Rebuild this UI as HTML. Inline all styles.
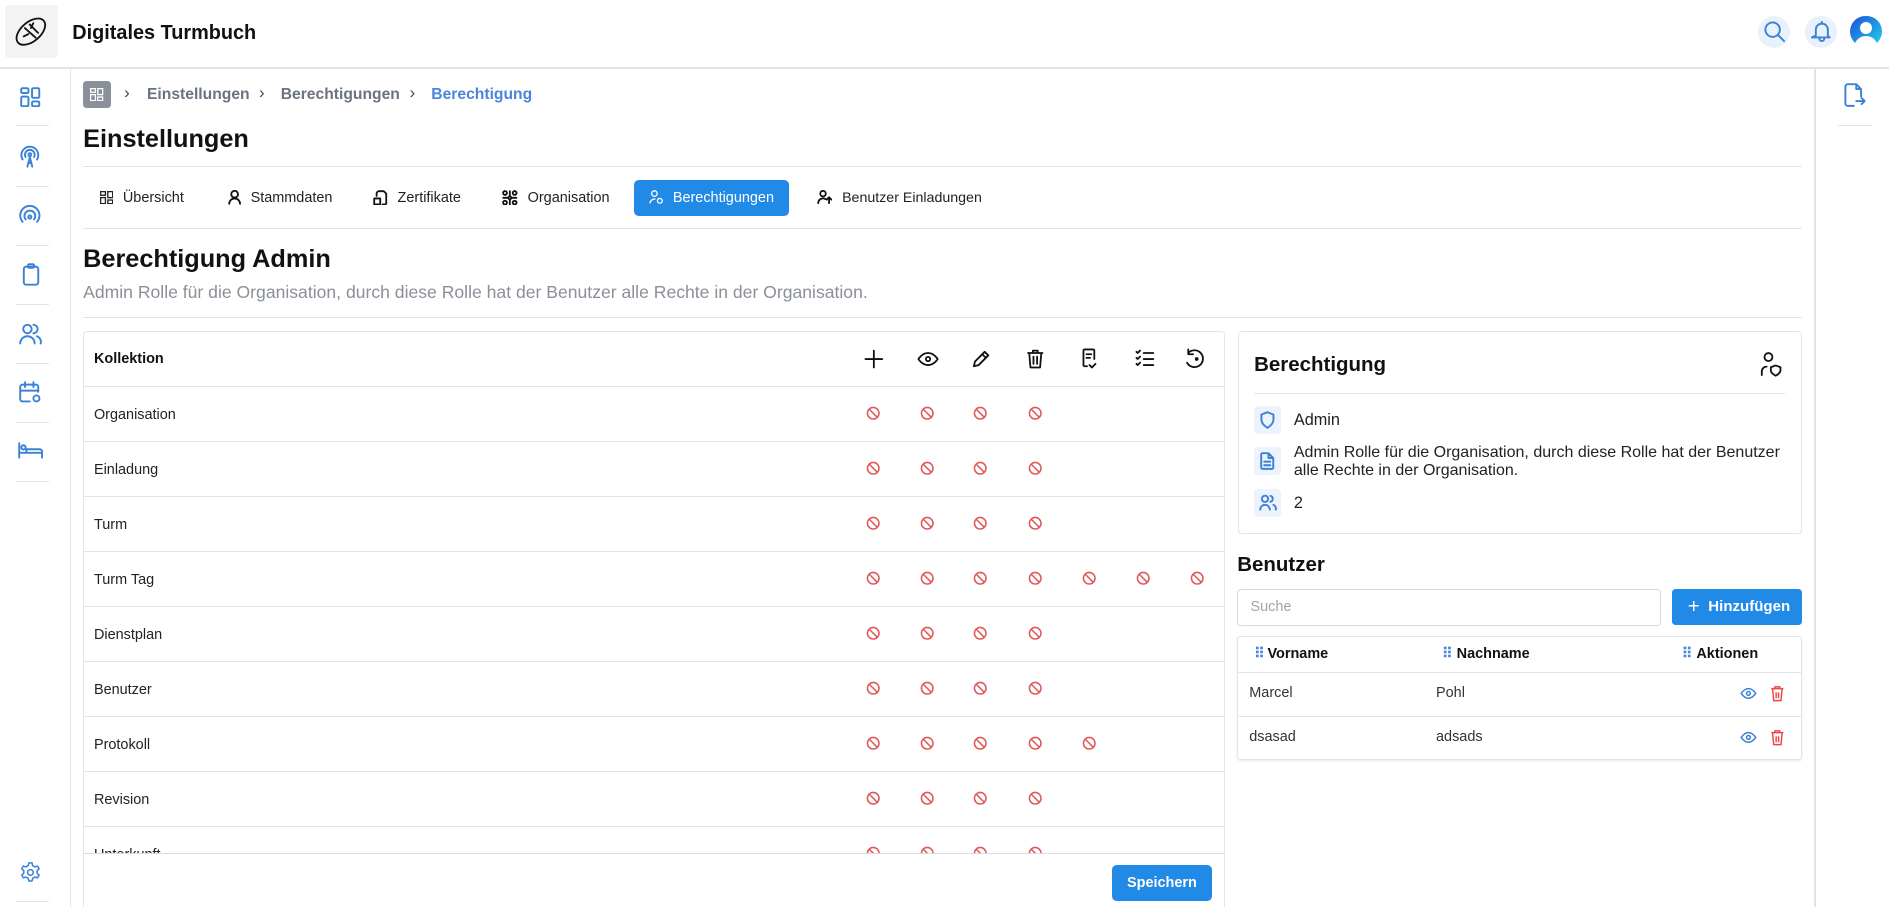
<!DOCTYPE html>
<html><head><meta charset="utf-8">
<style>
html,body{margin:0;padding:0;background:#fff;overflow:hidden}
body{width:1889px;height:908px}
#r{position:absolute;left:0;top:0;width:1568px;height:753px;overflow:hidden;zoom:1.20472;font-family:"Liberation Sans",sans-serif;color:#111}
.a{position:absolute}
.hl{position:absolute;height:1px;background:#e2e4e8}
.vl{position:absolute;width:1px;background:#e2e4e8}
svg{display:block}
.ic{stroke:#3b82d6;fill:none;stroke-width:1.6;stroke-linecap:round;stroke-linejoin:round}
.bk{stroke:#111;fill:none;stroke-width:1.5;stroke-linecap:round;stroke-linejoin:round}
.tab{position:absolute;top:149px;height:30px;line-height:30px;font-size:12px;color:#222;display:flex;align-items:center;gap:8px}
.row{position:absolute;left:70px;width:946px;height:46px;border-top:1px solid #e2e4e8;font-size:12px;color:#222}
.row span{position:absolute;left:8px;top:17px}
.ban{position:absolute;top:16px}
</style></head><body><div id="r">
<div class="a" style="left:4px;top:4px;width:44px;height:44px;background:#f2f3f5;border-radius:3px"></div>
<svg class="a" style="left:12px;top:13px" width="28" height="26" viewBox="0 0 28 26"><g class="bk" stroke-width="1.3"><ellipse cx="14" cy="13" rx="14" ry="8" transform="rotate(-40 14 13)"/><path d="M9 10l9 8M13 7l7 7M8 17l4-2M16 6l-2 4"/></g></svg>
<div class="a" style="left:60px;top:18px;font-size:16.5px;font-weight:bold">Digitales Turmbuch</div>
<div class="hl" style="left:0;top:56px;width:1568px"></div>
<div class="a" style="left:1459px;top:13px;width:27px;height:27px;border-radius:50%;background:#e8f1fc"></div>
<svg class="a" style="left:1463px;top:17px" width="20" height="20" viewBox="0 0 20 20"><g class="ic"><circle cx="8" cy="8" r="6"/><path d="M12.5 12.5l5 5"/></g></svg>
<div class="a" style="left:1498px;top:13px;width:27px;height:27px;border-radius:50%;background:#e8f1fc"></div>
<svg class="a" style="left:1503px;top:17px" width="18" height="18" viewBox="0 0 18 18"><g class="ic"><path d="M4 13V8a5 5 0 0110 0v5l1.5 1.5h-15z M7 15.5a2 2 0 004 0M9 1.5v1.5"/></g></svg>
<div class="a" style="left:1536px;top:13px;width:26px;height:26px;border-radius:50%;background:linear-gradient(135deg,#1d4ed8,#22d3ee)"></div>
<div class="a" style="left:1544px;top:18px;width:10px;height:10px;border-radius:50%;background:#fff"></div>
<div class="a" style="left:1539px;top:30px;width:20px;height:10px;border-radius:10px 10px 0 0;background:#fff"></div>
<div class="vl" style="left:58px;top:56px;height:698px"></div>
<svg class="a" style="left:17px;top:72px" width="17" height="17" viewBox="0 0 17 17"><g class="ic"><rect x="1" y="1" width="6" height="4" rx="1"/><rect x="1" y="8" width="6" height="8" rx="1"/><rect x="10" y="1" width="6" height="8" rx="1"/><rect x="10" y="12" width="6" height="4" rx="1"/></g></svg>
<div class="hl" style="left:13px;top:104px;width:28px"></div>
<svg class="a" style="left:16px;top:120px" width="18" height="20" viewBox="0 0 18 20"><g class="ic"><path d="M3 12a7 7 0 1112 0M5.5 10a4 4 0 117 0"/><circle cx="9" cy="8" r="1.2"/><path d="M7 18l2-8 2 8M7.5 15h3"/></g></svg>
<div class="hl" style="left:13px;top:154px;width:28px"></div>
<svg class="a" style="left:16px;top:170px" width="18" height="18" viewBox="0 0 18 18"><g class="ic"><path d="M3 14a8 8 0 1112 0M5.5 12a4.5 4.5 0 117 0"/><circle cx="9" cy="10" r="1.3"/></g></svg>
<div class="hl" style="left:13px;top:203px;width:28px"></div>
<svg class="a" style="left:18px;top:218px" width="15" height="19" viewBox="0 0 15 19"><g class="ic"><rect x="1.5" y="3" width="12" height="15" rx="2"/><rect x="5" y="1" width="5" height="3" rx="1"/></g></svg>
<div class="hl" style="left:13px;top:252px;width:28px"></div>
<svg class="a" style="left:16px;top:268px" width="19" height="18" viewBox="0 0 19 18"><g class="ic"><circle cx="7" cy="5" r="3.5"/><path d="M1 17a6 6 0 0112 0M12 1.5a3.5 3.5 0 010 7M15 11a5 5 0 013 6"/></g></svg>
<div class="hl" style="left:13px;top:301px;width:28px"></div>
<svg class="a" style="left:16px;top:316px" width="19" height="19" viewBox="0 0 19 19"><g class="ic"><path d="M9 17H3a2 2 0 01-2-2V5a2 2 0 012-2h11a2 2 0 012 2v4M1 8h15M5 1v4M12 1v4"/><circle cx="14.5" cy="14.5" r="2.5"/></g></svg>
<div class="hl" style="left:13px;top:350px;width:28px"></div>
<svg class="a" style="left:15px;top:367px" width="21" height="14" viewBox="0 0 21 14"><g class="ic"><path d="M1 1v12M1 9h19v4M7 9V6h11a2 2 0 012 2v1"/><circle cx="4.5" cy="4.5" r="1.8"/></g></svg>
<div class="hl" style="left:13px;top:399px;width:28px"></div>
<svg class="a" style="left:16px;top:715px" width="19" height="19" viewBox="0 0 24 24"><g class="ic" stroke-width="1.9"><circle cx="12" cy="12" r="3"/><path d="M10.3 2h3.4l.6 2.8 2.4 1.4 2.7-.9 1.7 2.9-2.1 1.9v2.8l2.1 1.9-1.7 2.9-2.7-.9-2.4 1.4-.6 2.8h-3.4l-.6-2.8-2.4-1.4-2.7.9-1.7-2.9 2.1-1.9v-2.8L2.9 8.2l1.7-2.9 2.7.9 2.4-1.4z"/></g></svg>
<div class="hl" style="left:13px;top:748px;width:28px"></div>
<div class="vl" style="left:1506px;top:56px;height:698px"></div>
<svg class="a" style="left:1530px;top:69px" width="19" height="20" viewBox="0 0 19 20"><g class="ic"><path d="M11 1H4a2 2 0 00-2 2v14a2 2 0 002 2h5M11 1l4 4v6M11 1v4h4M11 15h7M15.5 12.5L18 15l-2.5 2.5"/></g></svg>
<div class="hl" style="left:1526px;top:104px;width:28px"></div>
<div class="a" style="left:69px;top:67px;width:23px;height:23px;background:#8a9099;border-radius:3px"></div>
<svg class="a" style="left:75px;top:73px" width="11" height="11" viewBox="0 0 11 11"><g fill="none" stroke="#fff" stroke-width="1.1"><rect x=".5" y=".5" width="4" height="3"/><rect x=".5" y="5.5" width="4" height="5"/><rect x="6.5" y=".5" width="4" height="5"/><rect x="6.5" y="7.5" width="4" height="3"/></g></svg>
<div class="a" style="left:103px;top:69px;font-size:14px;color:#444">›</div>
<div class="a" style="left:122px;top:71px;font-size:13px;color:#6b7280;font-weight:bold">Einstellungen</div>
<div class="a" style="left:215px;top:69px;font-size:14px;color:#444">›</div>
<div class="a" style="left:233px;top:71px;font-size:13px;color:#6b7280;font-weight:bold">Berechtigungen</div>
<div class="a" style="left:340px;top:69px;font-size:14px;color:#444">›</div>
<div class="a" style="left:358px;top:71px;font-size:13px;color:#4a86d9;font-weight:bold">Berechtigung</div>
<div class="a" style="left:69px;top:104px;font-size:21px;font-weight:bold">Einstellungen</div>
<div class="hl" style="left:69px;top:138px;width:1427px"></div>
<div class="tab" style="left:83px"><svg width="11" height="11" viewBox="0 0 11 11"><g fill="none" stroke="#222" stroke-width="1.1"><rect x=".5" y=".5" width="4" height="3"/><rect x=".5" y="5.5" width="4" height="5"/><rect x="6.5" y=".5" width="4" height="5"/><rect x="6.5" y="7.5" width="4" height="3"/></g></svg>Übersicht</div>
<div class="tab" style="left:189px"><svg width="11" height="12" viewBox="0 0 11 12"><g class="bk" stroke-width="1.1"><circle cx="5.5" cy="3.5" r="2.8"/><path d="M1 11.5a4.5 4.5 0 019 0"/></g></svg>Stammdaten</div>
<div class="tab" style="left:310px"><svg width="12" height="13" viewBox="0 0 12 13"><g class="bk" stroke-width="1.1"><path d="M3 5V3a2 2 0 012-2h4l2 2v8a1 1 0 01-1 1H8"/><rect x="1" y="7" width="5" height="5"/></g></svg>Zertifikate</div>
<div class="tab" style="left:417px"><svg width="13" height="13" viewBox="0 0 13 13"><g class="bk" stroke-width="1.1"><circle cx="6.5" cy="6.5" r="1.2"/><circle cx="2.5" cy="2.5" r="1.6"/><circle cx="10.5" cy="2.5" r="1.6"/><circle cx="2.5" cy="10.5" r="1.6"/><circle cx="10.5" cy="10.5" r="1.6"/><path d="M6.5 1v4M6.5 8v4M1 6.5h4M8 6.5h4"/></g></svg>Organisation</div>
<div class="tab" style="left:526px;width:129px;background:#2189e6;border-radius:4px;color:#fff;justify-content:center"><svg width="12" height="12" viewBox="0 0 12 12"><g fill="none" stroke="#fff" stroke-width="1.1"><circle cx="4.5" cy="3" r="2.3"/><path d="M.8 11a4 4 0 014.5-3.5"/><circle cx="9" cy="9" r="2"/></g></svg>Berechtigungen</div>
<div class="tab" style="left:678px;font-size:11.8px"><svg width="13" height="12" viewBox="0 0 13 12"><g class="bk" stroke-width="1.1"><circle cx="5" cy="3" r="2.3"/><path d="M1 11a4 4 0 016-3.5M10 6v5M8 8l2-2 2 2"/></g></svg>Benutzer Einladungen</div>
<div class="hl" style="left:69px;top:189px;width:1427px"></div>
<div class="a" style="left:69px;top:203px;font-size:21px;font-weight:bold">Berechtigung Admin</div>
<div class="a" style="left:69px;top:234px;font-size:14.6px;color:#8a8f98">Admin Rolle für die Organisation, durch diese Rolle hat der Benutzer alle Rechte in der Organisation.</div>
<div class="hl" style="left:69px;top:263px;width:1427px"></div>
<div class="a" style="left:69px;top:275px;width:946px;height:479px;border:1px solid #e2e4e8;border-bottom:none;border-radius:3px 3px 0 0"></div>
<div class="a" style="left:78px;top:291px;font-size:12px;font-weight:bold">Kollektion</div>
<svg class="a" style="left:716px;top:288px" width="290" height="20" viewBox="0 0 290 20"><g class="bk">
<path d="M9 3v14M2 10h14"/>
<path d="M46 10s3-5 8-5 8 5 8 5-3 5-8 5-8-5-8-5z"/><circle cx="54" cy="10" r="1.8"/>
<path d="M92 16l1-4 8-8 3 3-8 8zM99 6l3 3"/>
<path d="M137 5h12M141 5V3h4v2M138 5l1 12h8l1-12M141.5 8v6M144.5 8v6"/>
<path d="M186 16h-2a1 1 0 01-1-1V3a1 1 0 011-1h7a1 1 0 011 1v7M185.5 6h4M185.5 9h3M188 15l2 2 3-3"/>
<path d="M227 4l1 1 2-2M227 9l1 1 2-2M227 14l1 1 2-2M233 5h8M233 10h8M233 15h8"/>
<path d="M270 5a7 7 0 11-1 8M270 2v4h4"/><circle cx="277" cy="10" r=".8" fill="#111"/>
</g></svg>
<div id="rows"></div>
<div class="hl" style="left:70px;top:708px;width:946px;background:#d8dbe0"></div>
<div class="a" style="left:70px;top:709px;width:945px;height:44px;background:#fff"></div>
<div class="a" style="left:923px;top:718px;width:83px;height:30px;background:#2189e6;border-radius:4px;color:#fff;font-size:12px;font-weight:bold;line-height:30px;text-align:center">Speichern</div>
<div class="a" style="left:1028px;top:275px;width:466px;height:167px;border:1px solid #e2e4e8;border-radius:3px"></div>
<div class="a" style="left:1041px;top:293px;font-size:17px;font-weight:bold">Berechtigung</div>
<svg class="a" style="left:1461px;top:291px" width="18" height="22" viewBox="0 0 18 22"><g class="bk" stroke-width="1.4"><circle cx="7" cy="5" r="3.3"/><path d="M1.5 20v-3a4 4 0 014-4"/><path d="M13 12l4 1.5v2.5c0 2-2 3.5-4 4.5-2-1-4-2.5-4-4.5v-2.5z"/></g></svg>
<div class="hl" style="left:1041px;top:326px;width:441px"></div>
<div class="a" style="left:1041px;top:337px;width:22px;height:23px;background:#ecf3fc;border-radius:3px"></div>
<svg class="a" style="left:1045px;top:341px" width="14" height="15" viewBox="0 0 14 15"><path class="ic" stroke-width="1.2" d="M7 1l5 2v4c0 3-2.5 5.5-5 7-2.5-1.5-5-4-5-7V3z"/></svg>
<div class="a" style="left:1074px;top:341px;font-size:13.5px;color:#222">Admin</div>
<div class="a" style="left:1041px;top:371px;width:22px;height:23px;background:#ecf3fc;border-radius:3px"></div>
<svg class="a" style="left:1046px;top:375px" width="12" height="15" viewBox="0 0 12 15"><path class="ic" stroke-width="1.2" d="M7 1H2a1 1 0 00-1 1v11a1 1 0 001 1h8a1 1 0 001-1V5zM7 1v4h4M3.5 8h5M3.5 11h5"/></svg>
<div class="a" style="left:1074px;top:368px;font-size:13.3px;color:#222;line-height:15px;width:420px">Admin Rolle für die Organisation, durch diese Rolle hat der Benutzer alle Rechte in der Organisation.</div>
<div class="a" style="left:1041px;top:406px;width:22px;height:23px;background:#ecf3fc;border-radius:3px"></div>
<svg class="a" style="left:1045px;top:410px" width="15" height="14" viewBox="0 0 15 14"><g class="ic" stroke-width="1.2"><circle cx="5" cy="4" r="2.6"/><path d="M1 13a4 4 0 018 0M9.5 1.5a2.6 2.6 0 010 5M12 9a4 4 0 012 4"/></g></svg>
<div class="a" style="left:1074px;top:410px;font-size:13.5px;color:#222">2</div>
<div class="a" style="left:1027px;top:459px;font-size:17px;font-weight:bold">Benutzer</div>
<div class="a" style="left:1027px;top:489px;width:350px;height:29px;border:1px solid #d6d9de;border-radius:3px"></div>
<div class="a" style="left:1038px;top:497px;font-size:12px;color:#a0a4ab">Suche</div>
<div class="a" style="left:1388px;top:489px;width:108px;height:30px;background:#2189e6;border-radius:3px;color:#fff;font-size:12.5px;font-weight:bold;line-height:30px"><span style="position:absolute;left:13px;font-size:17px;font-weight:normal">+</span><span style="position:absolute;left:30px">Hinzufügen</span></div>
<div class="a" style="left:1027px;top:528px;width:467px;height:101px;border:1px solid #e2e4e8;border-radius:3px;box-shadow:0 1px 2px rgba(0,0,0,.08)"></div>
<div class="hl" style="left:1028px;top:558px;width:467px"></div>
<div class="hl" style="left:1028px;top:594px;width:467px"></div>
<div class="a" style="left:1041px;top:536px;font-size:12px;font-weight:bold"><span style="color:#4a86d9;letter-spacing:-1px">⠿</span> Vorname</div>
<div class="a" style="left:1197px;top:536px;font-size:12px;font-weight:bold"><span style="color:#4a86d9">⠿</span> Nachname</div>
<div class="a" style="left:1396px;top:536px;font-size:12px;font-weight:bold"><span style="color:#4a86d9">⠿</span> Aktionen</div>
<div class="a" style="left:1037px;top:569px;font-size:12px;color:#333">Marcel</div>
<div class="a" style="left:1192px;top:569px;font-size:12px;color:#333">Pohl</div>
<div class="a" style="left:1037px;top:605px;font-size:12px;color:#333">dsasad</div>
<div class="a" style="left:1192px;top:605px;font-size:12px;color:#333">adsads</div>
<svg class="a" style="left:1444px;top:569px" width="40" height="14" viewBox="0 0 40 14"><g fill="none" stroke-width="1.2"><path stroke="#3b82d6" d="M1 7s2.5-4 6-4 6 4 6 4-2.5 4-6 4-6-4-6-4z"/><circle stroke="#3b82d6" cx="7" cy="7" r="1.6"/><path stroke="#ef4444" d="M26 3h10M29 3V1.5h4V3M27 3l1 10h6l1-10M30 6v5M32 6v5"/></g></svg>
<svg class="a" style="left:1444px;top:605px" width="40" height="14" viewBox="0 0 40 14"><g fill="none" stroke-width="1.2"><path stroke="#3b82d6" d="M1 7s2.5-4 6-4 6 4 6 4-2.5 4-6 4-6-4-6-4z"/><circle stroke="#3b82d6" cx="7" cy="7" r="1.6"/><path stroke="#ef4444" d="M26 3h10M29 3V1.5h4V3M27 3l1 10h6l1-10M30 6v5M32 6v5"/></g></svg>
<script>
(function(){
var names=["Organisation","Einladung","Turm","Turm Tag","Dienstplan","Benutzer","Protokoll","Revision","Unterkunft"];
var counts=[4,4,4,7,4,4,5,4,4];
var cols=[725,770,814,859,904,949,994];
var h="";
for(var i=0;i<names.length;i++){
 var ty=320+i*45.7;
 h+='<div class="row" style="top:'+ty+'px"><span>'+names[i]+'</span>';
 for(var j=0;j<counts[i];j++){
  h+='<svg class="ban" style="left:'+(cols[j]-70-6)+'px" width="12" height="12" viewBox="0 0 12 12"><g fill="none" stroke="#e05a5a" stroke-width="1.3"><circle cx="6" cy="6" r="4.8"/><path d="M2.7 2.7l6.6 6.6"/></g></svg>';
 }
 h+='</div>';
}
document.getElementById("rows").outerHTML=h;
})();
</script>
</div></body></html>
